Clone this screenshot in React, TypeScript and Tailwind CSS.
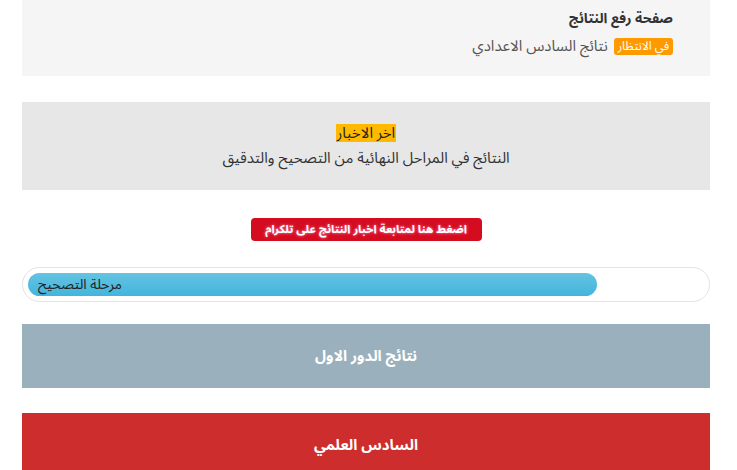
export default function App() {
  return (
    <div
      dir="rtl"
      className="min-h-[470px] bg-white pl-[22px] pr-[27px] text-[#333]"
      style={{ fontFamily: '"Noto Sans Arabic", "Noto Sans", sans-serif' }}
    >
      <div className="h-[76px] bg-[#f5f5f5] pr-[37px] pt-[8px]">
        <h2 className="text-[14px] font-bold leading-[22px] text-[#333]">صفحة رفع النتائج</h2>
        <div className="mt-[6px] flex items-center gap-[6px] text-[15px] leading-[20px]">
          <span className="rounded-[3px] bg-[#ff9900] px-[4px] text-[12px] leading-[17px] text-white">في الانتظار</span>
          <span className="text-[#555]">نتائج السادس الاعدادي</span>
        </div>
      </div>

      <div className="mt-[26px] flex h-[88px] flex-col items-center justify-center bg-[#e7e7e7] text-[15px]">
        <span className="block bg-[#ffba00] px-[1px] leading-[18px] text-[#222]">اخر الاخبار</span>
        <p className="mt-[6px] leading-[20px] text-[#333]">النتائج في المراحل النهائية من التصحيح والتدقيق</p>
      </div>

      <div className="flex justify-center pt-[28px]">
        <a className="flex h-[23px] w-[231px] items-center justify-center rounded-[4px] bg-[#d50c1f] text-[11.5px] font-bold text-white [text-shadow:0_0_3px_#ff9ad0]">
          اضغط هنا لمتابعة اخبار النتائج على تلكرام
        </a>
      </div>

      <div dir="ltr" className="mt-[26px] h-[35px] rounded-full border border-[#e3e3e3] px-[5px] py-[5px]">
        <div className="flex h-[23px] w-[569px] items-center rounded-full bg-gradient-to-b from-[#63c3e2] to-[#42b5dc] pl-[10px] text-[14px] text-[#222]">
          <span dir="rtl">مرحلة التصحيح</span>
        </div>
      </div>

      <div className="mt-[22px] flex h-[64px] items-center justify-center bg-[#9ab1bd] text-[15px] font-bold text-white">
        نتائج الدور الاول
      </div>

      <div className="mt-[25px] flex h-[64px] items-center justify-center bg-[#cd2d2d] text-[15px] font-bold text-white">
        السادس العلمي
      </div>
    </div>
  );
}
